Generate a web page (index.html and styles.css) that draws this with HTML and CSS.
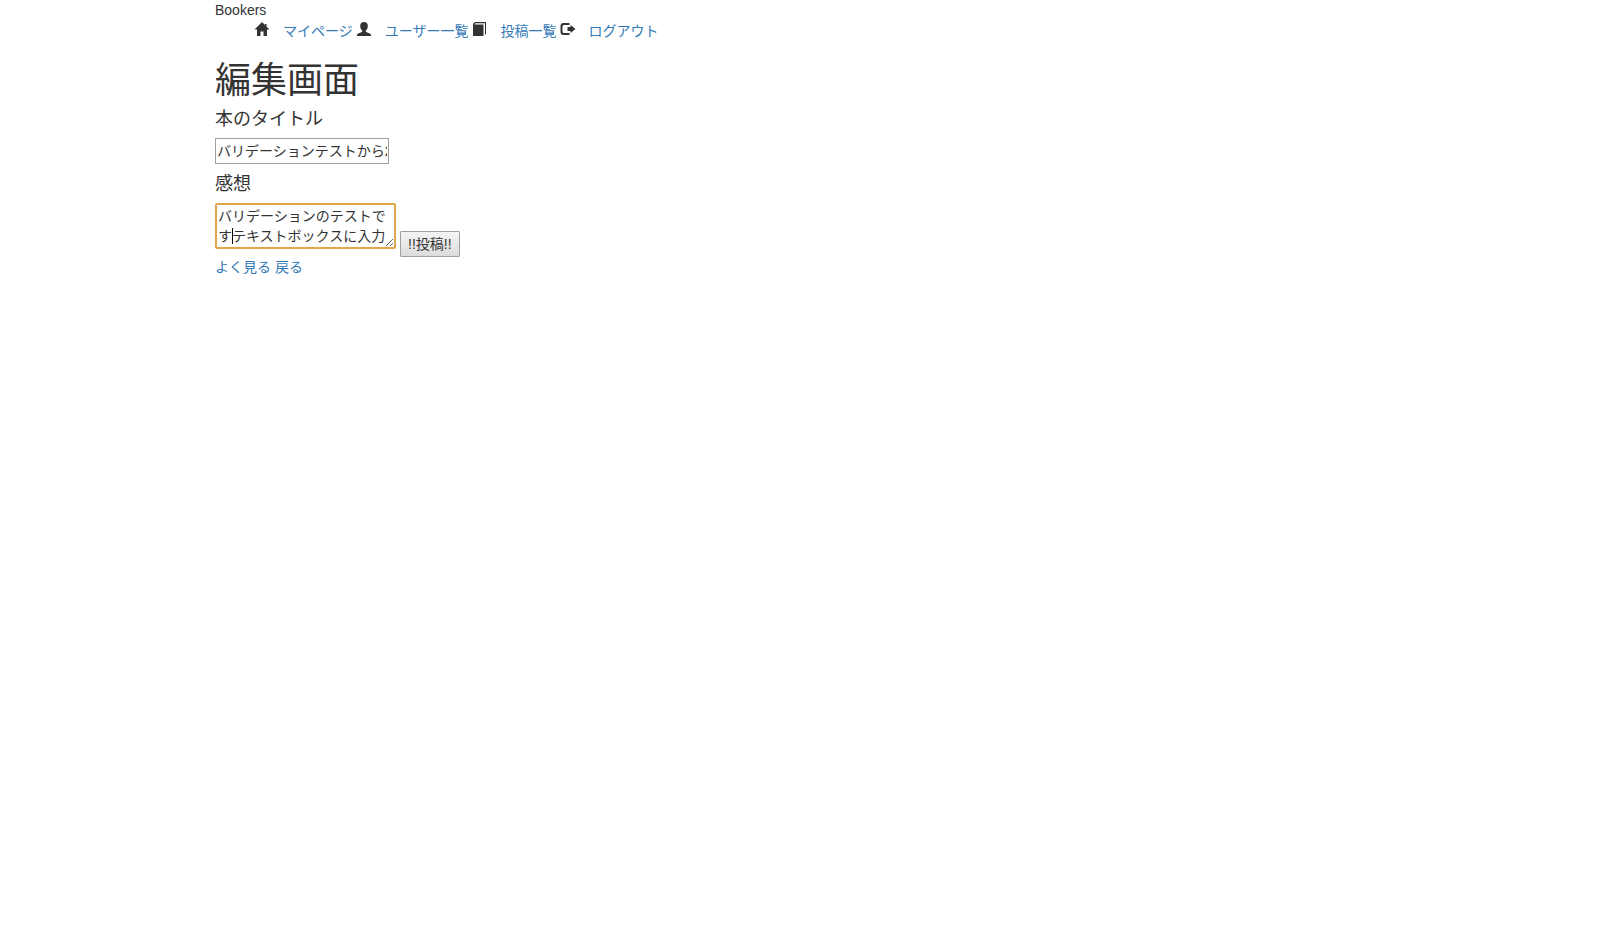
FILE: index.html
```html
<!DOCTYPE html>
<html lang="ja">
<head>
<meta charset="utf-8">
<title>Bookers</title>
<link rel="stylesheet" href="styles.css">
</head>
<body>
<div class="container">
  <header>
    <div class="brand">Bookers</div>
    <nav>
      <ul class="nav-list">
        <li><svg class="icon" viewBox="0 0 14 14" aria-hidden="true"><path d="M7 0L-.5 7.500H2V14H5.500V9.500H8.500V14H12V7.500H14.500L11.500 4.500V2H10V3z"/></svg><a href="#">マイページ</a></li>
        <li><svg class="icon" viewBox="0 0 14 14" aria-hidden="true"><path d="M7 0C4.500 0 3.200 1.500 3.200 4C3.200 6 4 7.600 5.200 8.500V9.700C4.500 10.400 0 11.200 0 13V14H14V13C14 11.200 9.500 10.400 8.800 9.700V8.500C10 7.600 10.800 6 10.800 4C10.800 1.500 9.500 0 7 0z"/></svg><a href="#">ユーザー一覧</a></li>
        <li><svg class="icon" viewBox="0 0 14 14" aria-hidden="true"><path d="M3 0H14V12L13 13V1.200H3.500L2.500 2.400H11.500V14H1V2z"/></svg><a href="#">投稿一覧</a></li>
        <li><svg class="icon" viewBox="0 0 14 14" aria-hidden="true"><path d="M9.500 1H3.500Q.5 1 .5 4v6q0 3 3 3h6v-2H4Q2.500 11 2.500 9.500v-5Q2.500 3 4 3h5.500z"/><path d="M10.500 3l5 4-5 4V9h-3V5h3z"/></svg><a href="#">ログアウト</a></li>
      </ul>
    </nav>
  </header>
  <main>
    <h1>編集画面</h1>
    <form>
      <h4><label for="title">本のタイトル</label></h4>
      <input class="title-input" id="title" type="text" value="バリデーションテストから2">
      <h4><label for="body">感想</label></h4>
      <div class="body-row">
        <div class="editor">
          <textarea class="body-input" id="body" rows="2">バリデーションのテストですテキストボックスに入力</textarea>
          <span class="caret"></span>
        </div>
        <button class="submit" type="button">!!投稿!!</button>
      </div>
    </form>
    <a href="#">よく見る</a>
    <a href="#">戻る</a>
  </main>
</div>
</body>
</html>
```
FILE: styles.css
```css
* { box-sizing: border-box; }
body {
  margin: 0;
  padding-right: 30px;
  background: #fff;
  color: #333;
  font: 14px/20px "Liberation Sans", "Noto Sans CJK JP", sans-serif;
}
.container {
  max-width: 1170px;
  margin: 0 auto;
  padding: 0 15px;
}
a { color: #337ab7; text-decoration: none; }
a:hover { text-decoration: underline; }
.nav-list {
  display: flex;
  gap: 4px;
  margin: 0;
  padding: 0 0 0 40px;
  list-style: none;
  line-height: 22px;
}
.nav-list li { display: flex; align-items: flex-start; gap: 14px; }
.icon {
  width: 14px;
  height: 14px;
  margin-top: 2px;
  fill: #333;
  overflow: visible;
}
h1 { margin: 19px 0 9px; font-size: 36px; line-height: 40px; font-weight: 400; }
h4 { margin: 0 0 10px; font-size: 18px; line-height: 18px; font-weight: 400; }
input, textarea, button { font: inherit; color: inherit; margin: 0; }
.title-input {
  display: block;
  width: 174px;
  height: 26px;
  margin-bottom: 11px;
  padding: 0 1px 2px;
  border: 1px solid #a0a0a0;
}
.body-row { display: flex; align-items: flex-end; gap: 4px; }
.editor { position: relative; margin-bottom: 8px; }
.body-input {
  display: block;
  width: 181px;
  height: 46px;
  padding: 1px;
  border: 2px solid #dfa74a;
  border-radius: 2px;
  outline: none;
  overflow: hidden;
}
.caret {
  position: absolute;
  left: 17px;
  top: 25px;
  width: 1px;
  height: 16px;
  background: #000;
}
.submit {
  height: 26px;
  padding: 0 7px;
  border: 1px solid #a0a0a0;
  border-radius: 1px;
  background: linear-gradient(#f4f4f4, #dcdcdc);
}
```
